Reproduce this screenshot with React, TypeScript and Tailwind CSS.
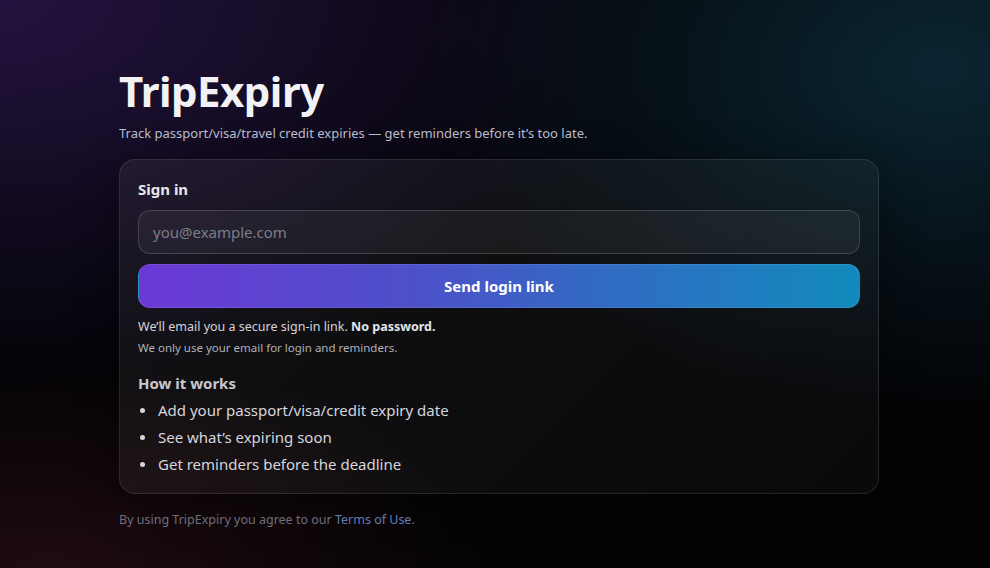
import React, { useState } from 'react';

const bullets = [
    'Add your passport/visa/credit expiry date',
    "See what\u2019s expiring soon",
    'Get reminders before the deadline',
];

export default function App() {
    const [email, setEmail] = useState('');

    return (
        <div
            className="relative min-h-[568px] w-full overflow-hidden bg-[#030305] text-[#e8e8ee]"
            style={{ fontFamily: '"Noto Sans", "Open Sans", sans-serif' }}
        >
            {/* fond : halos de couleur */}
            <div className="pointer-events-none absolute inset-0 bg-[radial-gradient(ellipse_85%_85%_at_0%_0%,#241340_0%,rgba(24,14,44,0.75)_40%,transparent_80%)]" />
            <div className="pointer-events-none absolute inset-0 bg-[radial-gradient(ellipse_65%_75%_at_95%_12%,#0a2632_0%,rgba(10,30,40,0.6)_40%,transparent_80%)]" />
            <div className="pointer-events-none absolute inset-0 bg-[radial-gradient(ellipse_60%_50%_at_5%_100%,#1e0b10_0%,transparent_75%)]" />

            <main className="relative ml-[119px] w-[760px] pt-[64px]">
                <h1 className="text-[42px] leading-[54px] font-bold tracking-[-0.5px] text-[#f2f2f6]">TripExpiry</h1>
                <p className="mt-[6px] text-[13px] leading-[18px] text-[#b9bccb]">
                    Track passport/visa/travel credit expiries — get reminders before it’s too late.
                </p>

                <section className="mt-[17px] rounded-[16px] border border-white/10 bg-[linear-gradient(135deg,rgba(255,255,255,0.06),rgba(255,255,255,0.03))] px-[18px] pt-[18px] pb-[15px] shadow-[0_10px_40px_rgba(0,0,0,0.4)]">
                    <h2 className="text-[15px] leading-[22px] font-bold text-[#e6e6ea]">Sign in</h2>

                    <input
                        type="email"
                        value={email}
                        onChange={(e) => setEmail(e.target.value)}
                        placeholder="you@example.com"
                        className="mt-[10px] block h-[44px] w-full rounded-[12px] border border-white/15 bg-white/[0.05] px-[14px] text-[15px] text-[#e6e6ea] placeholder:text-[#7b7e88] outline-none"
                    />

                    <button className="mt-[10px] block h-[44px] w-full rounded-[12px] border border-white/10 bg-[linear-gradient(90deg,#6c38d6,#4b52c8_40%,#2c70c2_70%,#128abc)] text-[15px] font-bold text-white">
                        Send login link
                    </button>

                    <p className="mt-[9px] text-[12.5px] leading-[20px] text-[#d4d4da]">
                        We’ll email you a secure sign-in link. <b className="font-bold text-[#e4e4ea]">No password.</b>
                    </p>
                    <p className="mt-[2px] text-[11.5px] leading-[18px] text-[#b0b0b8]">
                        We only use your email for login and reminders.
                    </p>

                    <h3 className="mt-[15px] text-[15px] leading-[22px] font-bold text-[#c8c8cf]">How it works</h3>
                    <ul className="mt-[3px]">
                        {bullets.map((b) => (
                            <li key={b} className="flex items-center h-[27px] text-[15px] text-[#d6d6dc]">
                                <span className="ml-[2px] mr-[13px] h-[5px] w-[5px] rounded-full bg-[#d6d6dc]" />
                                {b}
                            </li>
                        ))}
                    </ul>
                </section>

                <p className="mt-[17px] text-[12.5px] leading-[18px] text-[#6e6e7c]">
                    By using TripExpiry you agree to our <a href="#" className="text-[#5f7fb4]">Terms of Use</a>.
                </p>
            </main>
        </div>
    );
}
